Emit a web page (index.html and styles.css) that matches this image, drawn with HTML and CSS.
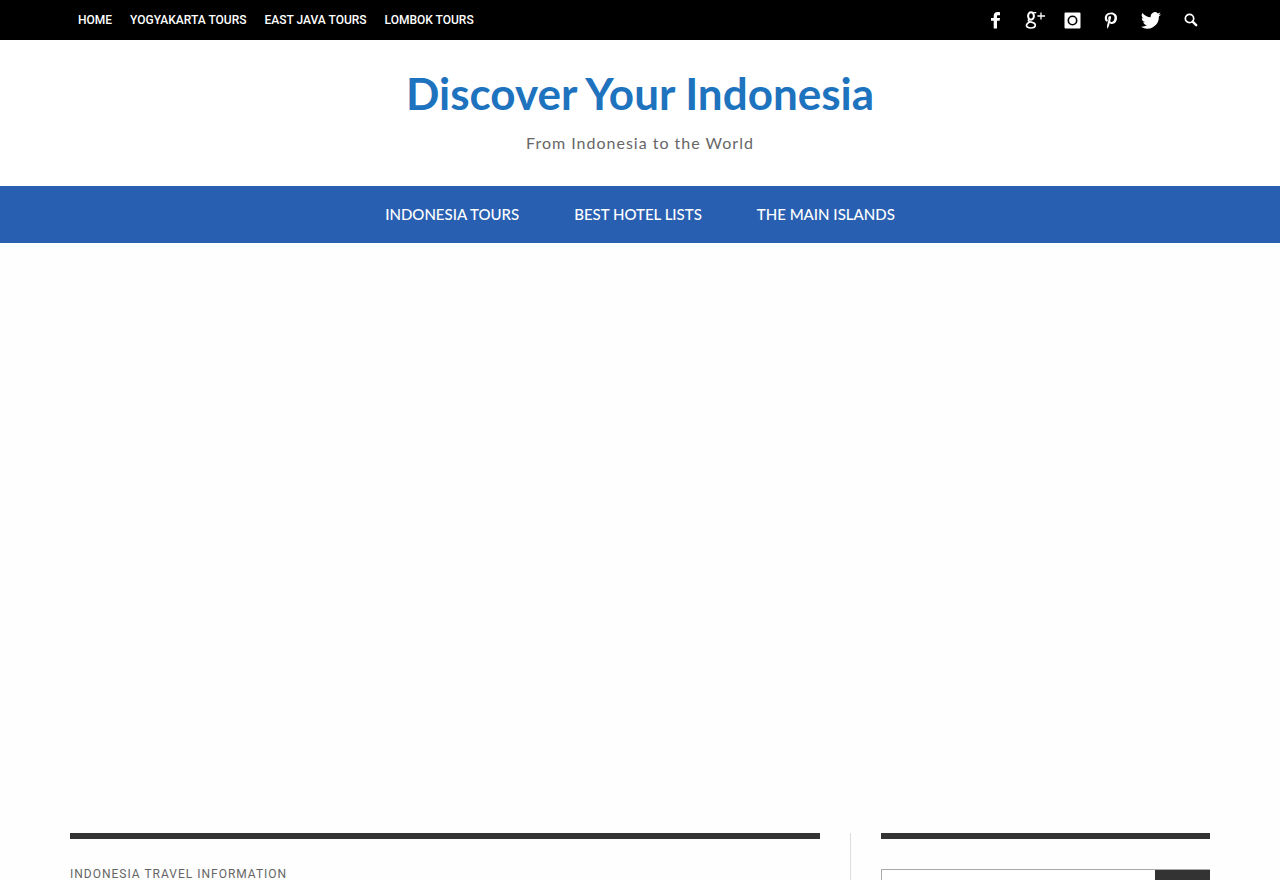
FILE: index.html
```html
<!DOCTYPE html>
<html lang="en">
<head>
<meta charset="utf-8">
<meta name="viewport" content="width=device-width, initial-scale=1">
<title>Discover Your Indonesia</title>
<link rel="stylesheet" href="styles.css">
</head>
<body>
<div class="topbar">
  <div class="container topbar-inner">
    <nav class="top-links" aria-label="Top">
      <a href="#">HOME</a>
      <a href="#">YOGYAKARTA TOURS</a>
      <a href="#">EAST JAVA TOURS</a>
      <a href="#">LOMBOK TOURS</a>
    </nav>
    <div class="social">
      <a href="#" aria-label="Facebook"><svg width="12" height="18" viewBox="0 0 12 18"><path d="M10 1.200v3H8.100C7.200 4.200 7 4.600 7 5.400v1.500h3l-.4 2.800H7V17.500H3.700V9.700H1V6.900h2.700V4.800C3.700 2.300 5.100 1 7.500 1c1 0 2 .1 2.500.2z"/></svg></a>
      <a href="#" aria-label="Google Plus"><svg width="16" height="18" viewBox="0 0 16 18" overflow="visible"><g fill="none" stroke="#fff"><ellipse cx="6" cy="5" rx="2.900" ry="3.700" stroke-width="2"/><path d="M8 1.700h3.200" stroke-width="1.300"/><path d="M4.300 8.300c-1.800 1.200-.8 2.200 1 2.600 2.800.6 5 1.100 5 3.100 0 1.800-2 3-4.600 3-2.500 0-4.200-.9-4.200-2.500 0-1.500 1.400-2.500 3.200-3.400" stroke-width="1.700"/><path d="M16 1.500v7M12.500 5h7.500" stroke-width="1.300"/></g></svg></a>
      <a href="#" aria-label="Instagram"><svg width="17" height="17" viewBox="0 0 17 17"><path fill-rule="evenodd" d="M1.500.500h14q1 0 1 1v14q0 1-1 1h-14q-1 0-1-1v-14q0-1 1-1zM8.500 3.500a5 5 0 1 0 0 10 5 5 0 0 0 0-10zm0 1.600a3.400 3.400 0 1 1 0 6.800 3.400 3.400 0 0 1 0-6.800z"/></svg></a>
      <a href="#" aria-label="Pinterest"><svg width="14" height="17" viewBox="0 0 14 17"><path d="M7.200.6C3 .6.800 3.400.800 6.200c0 1.600.7 3 2 3.500.4.200.6 0 .7-.4l.3-.9c0-.2 0-.4-.2-.6C2.300 6.100 3 2.300 6.900 2.300c2.300 0 3.600 1.300 3.600 3.300 0 2.500-1.200 4.400-2.800 4.400-.9 0-1.600-.7-1.400-1.600.3-1.100.8-2.200.8-3.100 0-1.900-2.900-1.600-2.900 1 0 .9.300 1.500.3 1.500L3.200 13c-.3 1.300 0 3.200 0 3.400l.4.100c.3-.5 1.200-2.200 1.500-3.300l.7-2.300c.4.600 1.300 1 2.200 1 3 0 5-2.700 5-6.200C13 2.900 10.700.6 7.200.6z"/></svg></a>
      <a href="#" aria-label="Twitter"><svg width="20" height="17" viewBox="0 0 24 20"><path d="M24 2.400a9.800 9.800 0 0 1-2.800.8A5 5 0 0 0 23.300.500a9.900 9.900 0 0 1-3.100 1.200A4.900 4.900 0 0 0 11.800 6.200 14 14 0 0 1 1.700 1a4.900 4.900 0 0 0 1.500 6.600A4.900 4.900 0 0 1 1 7v.1a4.900 4.900 0 0 0 3.900 4.800 4.900 4.900 0 0 1-2.200.1 4.900 4.900 0 0 0 4.600 3.400A9.900 9.900 0 0 1 0 17.500 14 14 0 0 0 21.500 5.700v-.700A10 10 0 0 0 24 2.400z"/></svg></a>
      <button type="button" aria-label="Search"><svg width="14" height="14" viewBox="0 0 14 14"><g fill="none" stroke="#fff"><circle cx="5.500" cy="5.500" r="4.200" stroke-width="1.700"/><path d="M8.600 8.600l3.600 3.600" stroke-width="2.400" stroke-linecap="round"/></g></svg></button>
    </div>
  </div>
</div>
<header class="site-header">
  <h1><a href="#">Discover Your Indonesia</a></h1>
  <p>From Indonesia to the World</p>
</header>
<nav class="main-nav" aria-label="Main">
  <a href="#">INDONESIA TOURS</a>
  <a href="#">BEST HOTEL LISTS</a>
  <a href="#">THE MAIN ISLANDS</a>
</nav>
<div class="feature"></div>
<div class="container columns">
  <main class="content">
    <h2>INDONESIA TRAVEL INFORMATION</h2>
  </main>
  <aside class="sidebar">
    <div class="widget">
      <form class="search">
        <input type="text" aria-label="Search the site">
        <button type="submit" aria-label="Search"></button>
      </form>
    </div>
  </aside>
</div>
</body>
</html>
```
FILE: styles.css
```css
* { box-sizing: border-box; }

body {
  margin: 0;
  height: 100vh;
  overflow: hidden;
  background: #fefefe;
  color: #666;
  font-family: Roboto, "Open Sans", sans-serif;
}

a { color: inherit; text-decoration: none; }

.container {
  width: 100%;
  max-width: 1140px;
  margin: 0 auto;
}

.topbar { background: #000; color: #fff; }

.topbar-inner {
  display: flex;
  justify-content: space-between;
  align-items: center;
  height: 40px;
  padding: 0 12px 0 8px;
}

.top-links {
  display: flex;
  gap: 18px;
  font-size: 12px;
  font-weight: 500;
  line-height: 18px;
}

.social { display: flex; align-items: center; gap: 23px; }
.social a, .social button { display: flex; }
.social svg { fill: #fff; }

.social button {
  padding: 0;
  border: 0;
  background: none;
}

.site-header {
  padding: 23px 0 32px;
  background: #fff;
  font-family: Lato, "Open Sans", sans-serif;
  text-align: center;
}

.site-header h1 {
  margin: 0;
  color: #1e73be;
  font-size: 44px;
  font-weight: 700;
  line-height: 60px;
}

.site-header p {
  margin: 9px 0 0;
  font-size: 16px;
  line-height: 22px;
  letter-spacing: 1px;
}

.main-nav {
  display: flex;
  justify-content: center;
  gap: 55px;
  padding: 16px 0 17px;
  background: #285fb1;
  color: #fff;
  font-family: Lato, "Open Sans", sans-serif;
  font-size: 15px;
  font-weight: 500;
  line-height: 24px;
}

.feature { height: 590px; }

.columns {
  display: grid;
  grid-template-columns: minmax(0, 750fr) minmax(0, 360fr);
  gap: 30px;
}

.content {
  border-top: 6px solid #333;
  padding-top: 26px;
}

.content h2 {
  margin: 0;
  font-size: 12px;
  font-weight: 400;
  line-height: 18px;
  letter-spacing: 1px;
}

.sidebar {
  min-height: 90px;
  padding-left: 30px;
  border-left: 1px solid #ddd;
}

.widget {
  border-top: 6px solid #333;
  padding-top: 30px;
}

.search {
  display: flex;
  height: 50px;
  border: 1px solid #aaa;
  border-right: 0;
}

.search input {
  flex: 1;
  min-width: 0;
  border: 0;
  background: #fff;
}

.search button {
  width: 55px;
  border: 0;
  background: #333;
}
```
